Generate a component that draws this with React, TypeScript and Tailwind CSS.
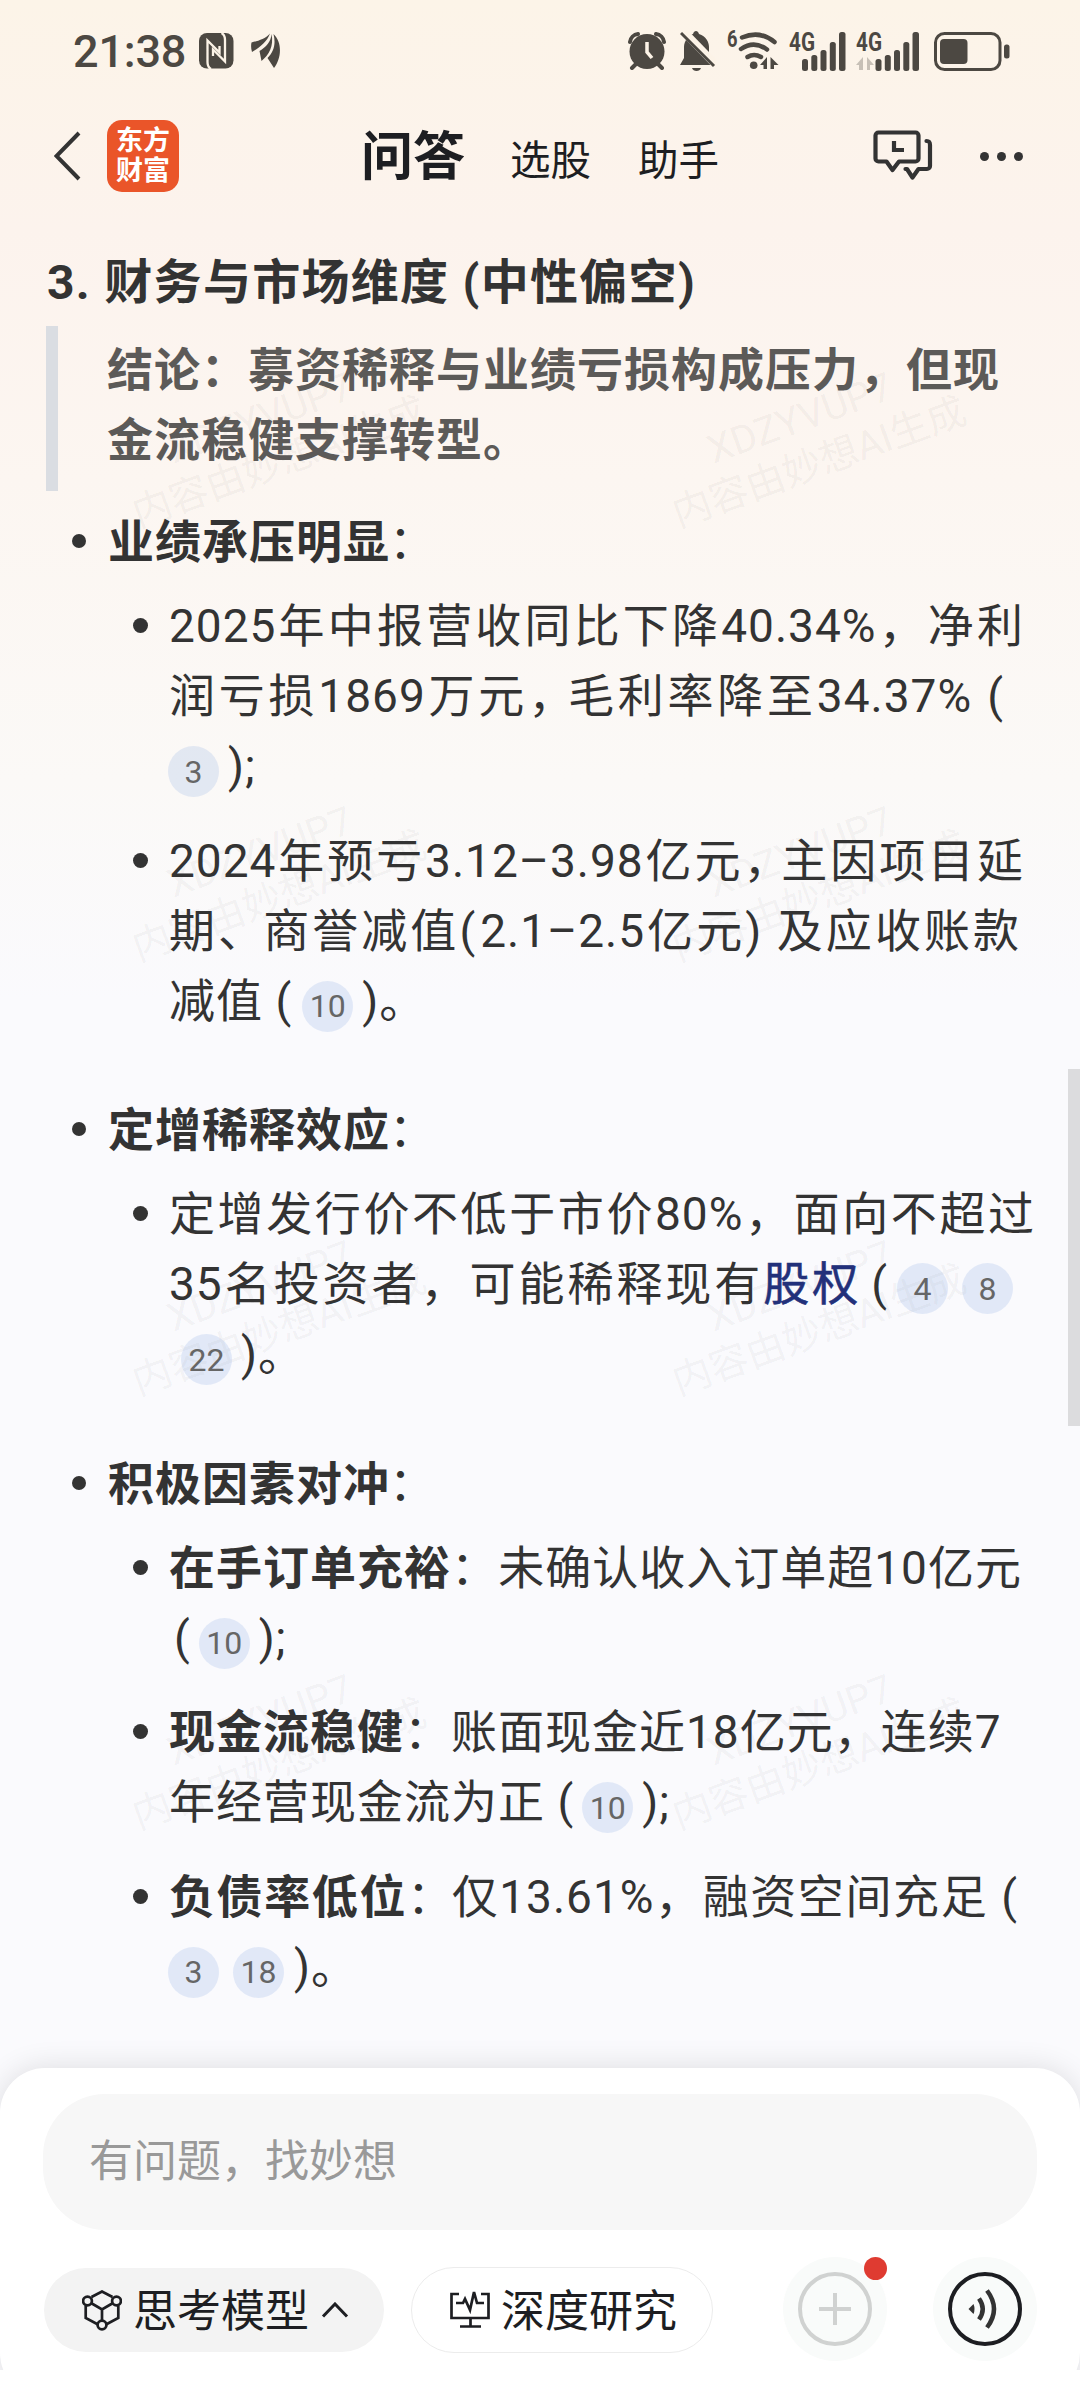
import { Fragment, type ReactNode } from "react";

const watermarkRows = [440, 874, 1308, 1742];
const watermarkCols = [271, 811];

function Cite({ n }: { n: string }) {
  return (
    <span className="relative top-[2px] -ml-px inline-flex size-[51px] shrink-0 items-center justify-center rounded-full bg-[#5a89d4]/15 align-middle text-[32px] leading-none tracking-normal text-[#666]">
      {n}
    </span>
  );
}

// One rendered row of text. `w` stretches the row to a justified width.
function Line({ children, w = "" }: { children: ReactNode; w?: string }) {
  const justify = w ? "[text-align-last:justify]" : "";
  return <div className={`h-[70px] leading-[73px] whitespace-nowrap ${justify} ${w}`}>{children}</div>;
}

function SubItem({ children }: { children: ReactNode }) {
  return (
    <li className="flex">
      <span className="mt-[28px] mr-[21px] ml-[13px] size-[15px] shrink-0 rounded-full bg-[#333]" />
      <div className="shrink-0">{children}</div>
    </li>
  );
}

function Group({ title, children }: { title: string; children: ReactNode }) {
  return (
    <section>
      <div className="flex h-[70px] items-center">
        <span className="mr-[22px] ml-[72px] size-[14px] rounded-full bg-[#333]" />
        <h3 className="pt-[3px]">
          <b>{title}</b>
          <span className="-ml-[1px]">：</span>
        </h3>
      </div>
      <ul className="mt-[14px] ml-[120px] flex flex-col gap-[24.5px]">{children}</ul>
    </section>
  );
}

function SignalBars() {
  return (
    <g>
      <rect x="13" y="27" width="6" height="12" rx="2.5" />
      <rect x="22.300" y="23" width="6" height="16" rx="2.5" />
      <rect x="31.500" y="18" width="6" height="21" rx="2.5" />
      <rect x="40.800" y="10" width="6" height="29" rx="2.5" />
      <rect x="50" y="0" width="6.500" height="39" rx="2.5" />
    </g>
  );
}

function StatusBar() {
  return (
    <div className="flex h-[104px] items-center pb-[2px] text-[#4c4842]">
      <span className="ml-[73px] w-[126px] font-[Roboto] text-[45px] leading-none font-medium tracking-[-0.2px]">21:38</span>
      <svg width="35" height="36" viewBox="0 0 35 36" fill="currentColor">
        <rect width="34.500" height="35.500" rx="8" />
        <path d="M12 36Q8.500 34 8.500 29V7.500L20.500 19.500V13" fill="none" stroke="#fcf3e7" strokeWidth="2.300" />
        <path d="M22.500 0Q26 2 26 7v21.500L14 16.500V23" fill="none" stroke="#fcf3e7" strokeWidth="2.300" />
      </svg>
      <svg className="ml-[17px]" width="30" height="36" viewBox="0 0 30 36" fill="currentColor">
        <path d="M19 0.500C14 6 7 8 0.500 9.500Q-0.500 14 1 19C8 15 16 9 19 0.500z" />
        <path d="M20.500 1C20 9 15 14 8.500 18l2 10C18 22 23 13 20.500 1z" />
        <path d="M22.500 1C25 11 23 19 16.500 25l6.500 10C30 26 32 10 22.500 1z" />
      </svg>
      <div className="ml-[347px] flex items-center">
        <svg width="38" height="38" viewBox="0 0 38 38">
          <circle cx="19" cy="19.500" r="17.500" fill="currentColor" />
          <path d="M2 10A9 9 0 0 1 10 2M28 2a9 9 0 0 1 8 8M8 32l-4 4M30 32l4 4" fill="none" stroke="currentColor" strokeWidth="4" strokeLinecap="round" />
          <path d="M19 10v10l5 6" fill="none" stroke="#fcf3e7" strokeWidth="3.500" />
        </svg>
        <svg className="ml-[14px]" width="36" height="40" viewBox="0 0 36 40">
          <path d="M0 34l4-7V16c0-6 5-12 9-13 1-4 5-4 6 0 7 2 10 8 10 13v12l4 6z" fill="currentColor" />
          <path d="M12 37h9c-1 4-8 4-9 0z" fill="currentColor" />
          <path d="M3 0l33 34" stroke="#fcf3e7" strokeWidth="8" />
          <path d="M1 2l33 33" stroke="currentColor" strokeWidth="3" />
        </svg>
        <svg className="ml-[11px] overflow-visible" width="52" height="42" viewBox="0 0 52 42" fill="currentColor">
          <text x="0" y="16.500" fontFamily="Roboto" fontWeight="700" fontSize="23" textLength="10.500" lengthAdjust="spacingAndGlyphs">6</text>
          <g fill="none" stroke="currentColor" strokeWidth="4.500" strokeLinecap="round">
            <path d="M15 7.500Q33 0 47.500 12" />
            <path d="M14 19Q27 10 40 19.500" />
            <path d="M20.500 27Q27 23 34 27" />
          </g>
          <circle cx="26.700" cy="35.300" r="3.800" />
          <path d="M33 35l7-8v12h-3.500v-4zM43.500 27l8 8h-4.500v4h-3.500z" />
        </svg>
        <svg className="ml-[10px] overflow-visible" width="57" height="39" viewBox="0 0 57 39" fill="currentColor">
          <text x="0" y="18.500" fontFamily="Roboto" fontWeight="700" fontSize="25" textLength="26" lengthAdjust="spacingAndGlyphs">4G</text>
          <SignalBars />
        </svg>
        <svg className="ml-[10px] overflow-visible" width="63" height="39" viewBox="0 0 63 39" fill="currentColor">
          <text x="0" y="18.500" fontFamily="Roboto" fontWeight="700" fontSize="25" textLength="26" lengthAdjust="spacingAndGlyphs">4G</text>
          <path d="M0 33l7-8v13H3v-5zM11 25l7 8h-4v5h-3z" opacity="0.300" />
          <g transform="translate(6.500 0)">
            <SignalBars />
          </g>
        </svg>
        <svg className="ml-[15px]" width="76" height="39" viewBox="0 0 76 39">
          <rect x="1.500" y="1.500" width="64.500" height="36" rx="9" fill="none" stroke="currentColor" strokeWidth="3" />
          <rect x="6" y="7" width="27.500" height="25" rx="4" fill="currentColor" />
          <rect x="70" y="12.500" width="5.500" height="14" rx="2.500" fill="currentColor" />
        </svg>
      </div>
    </div>
  );
}

function Header() {
  return (
    <div className="flex h-[104px] items-center text-[#333]">
      <svg className="ml-[54px]" width="27" height="50" viewBox="0 0 27 50" fill="none" stroke="currentColor" strokeWidth="4">
        <path d="M25 2L2.500 25 25 48" />
      </svg>
      <div className="ml-[26px] flex size-[72px] flex-col items-center justify-center rounded-[15px] bg-[#ea5529] text-[27px] leading-[30px] font-bold text-white">
        <span>东方</span>
        <span>财富</span>
      </div>
      <nav className="flex items-center whitespace-nowrap text-[#1d1e22]">
        <span className="mt-[3px] ml-[182px] w-[149px] text-[52px] leading-none font-bold">问答</span>
        <span className="mt-[11px] w-[128px] text-[40.5px] leading-none">选股</span>
        <span className="mt-[11px] w-[82px] text-[40.5px] leading-none">助手</span>
      </nav>
      <svg className="ml-[153px]" width="60" height="52" viewBox="0 0 60 52" fill="none" stroke="currentColor" strokeWidth="4.200" strokeLinejoin="round" strokeLinecap="round">
        <path d="M5.500 2.500h37a3 3 0 0 1 3 3v23a3 3 0 0 1-3 3H26l-6.500 8.500-6-8.500h-8a3 3 0 0 1-3-3v-23a3 3 0 0 1 3-3z" />
        <path d="M53.500 11c3 0 3.500 1.500 3.500 4v21a3 3 0 0 1-3 3h-8.500l-6 8.500L34 39h-1.500" />
        <path d="M21 11v9h10" strokeLinejoin="miter" strokeLinecap="butt" />
      </svg>
      <div className="ml-[47px] flex gap-[8px]">
        <i className="size-[9px] rounded-full bg-[#333]" />
        <i className="size-[9px] rounded-full bg-[#333]" />
        <i className="size-[9px] rounded-full bg-[#333]" />
      </div>
    </div>
  );
}

function Composer() {
  return (
    <footer className="absolute top-[2068px] left-0 h-[332px] w-full overflow-visible">
      <div className="h-[330px] rounded-[45px] bg-white px-[43px] pt-[26px] shadow-[0_0_30px_rgba(0,0,0,0.12)]">
        <div className="flex h-[136px] items-center rounded-[62px] bg-[#f7f7f7] pl-[46px] text-[44px] text-[#999]">有问题，找妙想</div>
        <div className="mt-[27px] flex h-[104px] items-center text-[44px] text-[#1d1e22]">
          <div className="mt-[2px] ml-px flex h-[84px] w-[340px] items-center rounded-full bg-[#f3f3f3] pl-[38px]">
            <svg width="40" height="41" viewBox="0 0 40 41" fill="none" stroke="currentColor" strokeWidth="2.700">
              <path d="M9.500 7L20 1.500 30.500 7M3.700 15.500V28L16 34.500M36.300 15.500V28L24 34.500M9 13l11 6.500L31 13M20 19.500V31" />
              <circle cx="5.500" cy="11" r="4.400" />
              <circle cx="34.500" cy="11" r="4.400" />
              <circle cx="20" cy="35" r="4.400" />
            </svg>
            <span className="mt-[4px] ml-[11px] leading-none">思考模型</span>
            <svg className="ml-[12px]" width="28" height="16" viewBox="0 0 28 16" fill="none" stroke="currentColor" strokeWidth="3">
              <path d="M2 14.500L14 2l12 12.500" />
            </svg>
          </div>
          <div className="mt-px ml-[27px] flex h-[86px] w-[302px] items-center rounded-full border border-[#ececec] pl-[38px]">
            <svg width="40" height="39" viewBox="0 0 40 39" fill="none" stroke="currentColor" strokeWidth="2.700">
              <path d="M9 4H1.500V28h37V4H31M20.500 28v8M10 36.500h21M6 13h7l2-4 5 11L24 2l3 11h7" />
            </svg>
            <span className="mt-[4px] ml-[11px] leading-none">深度研究</span>
          </div>
          <div className="relative ml-[70px] flex size-[104px] shrink-0 items-center justify-center rounded-full bg-[#f9fbfa]">
            <svg width="74" height="74" viewBox="0 0 74 74" fill="none" stroke="#d0d2d1" strokeWidth="4">
              <circle cx="37" cy="37" r="35" />
              <path d="M21 37h32M37 21v32" />
            </svg>
            <i className="absolute top-0 right-0 size-[23px] rounded-full bg-[#df3b31]" />
          </div>
          <div className="ml-[46px] flex size-[104px] shrink-0 items-center justify-center rounded-full bg-[#f9fbfa]">
            <svg width="74" height="74" viewBox="0 0 74 74" fill="none" stroke="#1d1e22" strokeWidth="4">
              <circle cx="37" cy="37" r="35" />
              <path d="M20.500 37l5-5q2 5 0 10z" fill="#333" stroke="none" />
              <path d="M31 26.500q7.500 10.500 0 21M39 18.500q14 18.500 0 37" stroke="#333" strokeWidth="4.500" />
            </svg>
          </div>
        </div>
      </div>
      <div className="absolute bottom-0 left-0 h-[30px] w-full bg-white" />
    </footer>
  );
}

export default function App() {
  return (
    <div className="relative h-[2400px] w-[1080px] overflow-hidden bg-[#fafafd] bg-[linear-gradient(180deg,#fcf4e8_0px,#fcf3ed_230px,#fcf6f1_480px,#fbf9f7_780px,#fafafd_1000px)] font-[Roboto,'Noto_Sans_CJK_SC',sans-serif] text-[#333]">
      <div className="pointer-events-none absolute inset-0">
        {watermarkRows.map((y) => (
          <Fragment key={y}>
            {watermarkCols.map((x) => (
              <div
                key={x}
                className="absolute w-[340px] -translate-x-1/2 -translate-y-1/2 -rotate-20 text-center text-[39px] leading-[48px] whitespace-nowrap text-black/5"
                style={{ left: x, top: y }}
              >
                <span className="mr-[6px]">XDZYVUP7</span>
                <br />
                内容由妙想AI生成
              </div>
            ))}
          </Fragment>
        ))}
      </div>

      <div className="relative">
        <StatusBar />
        <Header />

        <main className="pt-[38px] text-[46px] tracking-[1px]">
          <h2 className="ml-[47px] h-[70px] text-[48px] leading-[73px] font-bold tracking-[1.3px] whitespace-nowrap">3. 财务与市场维度 (中性偏空)</h2>
          <blockquote className="mt-[10px] ml-[46px] h-[165px] border-l-[12px] border-[#dadde2] pt-[8px] pl-[49px] font-bold text-[#5c5a58]">
            <Line>结论：募资稀释与业绩亏损构成压力，但现</Line>
            <Line>金流稳健支撑转型。</Line>
          </blockquote>

          <div className="mt-[15px] flex flex-col gap-[59.500px]">
            <Group title="业绩承压明显">
              <SubItem>
                <Line w="w-[855px]">2025年中报营收同比下降40.34%，净利</Line>
                <Line w="w-[835px]">
                  润亏损1869万元<span className="-mr-[10px]">，</span>毛利率降至34.37% (
                </Line>
                <Line>
                  <Cite n="3" />
                  <span className="ml-[9px]">);</span>
                </Line>
              </SubItem>
              <SubItem>
                <Line w="w-[855px]">
                  2024年预亏3.12–3.98亿元<span className="-mr-[11px]">，</span>主因项目延
                </Line>
                <Line w="w-[851px]">
                  期<span className="-mr-[4px]">、</span>商誉减值(<span className="ml-[4px]">2.1–2.5亿元</span>) 及应收账款
                </Line>
                <Line>
                  减值 (<span className="inline-block w-[11px]" />
                  <Cite n="10" />
                  <span className="ml-[9px]">)。</span>
                </Line>
              </SubItem>
            </Group>

            <Group title="定增稀释效应">
              <SubItem>
                <Line w="w-[866px]">定增发行价不低于市价80%，面向不超过</Line>
                <div className="flex h-[70px] whitespace-nowrap">
                  <Line w="w-[719px]">
                    35名投资者，可能稀释现有
                    <span className="text-[#22307a] [-webkit-text-stroke:0.6px_#22307a]">股权</span>
                    <span className="ml-[10px]">(</span>
                  </Line>
                  <span className="mt-[13px] ml-[10px] flex gap-[15px]">
                    <Cite n="4" />
                    <Cite n="8" />
                  </span>
                </div>
                <Line>
                  <span className="ml-[13px]">
                    <Cite n="22" />
                    <span className="ml-[9px]">)。</span>
                  </span>
                </Line>
              </SubItem>
            </Group>

            <Group title="积极因素对冲">
              <SubItem>
                <Line w="w-[853px]">
                  <b>在手订单充裕</b>：未确认收入订单超10亿元
                </Line>
                <Line>
                  <span className="mr-[9px] ml-[5px]">(</span>
                  <Cite n="10" />
                  <span className="ml-[9px]">);</span>
                </Line>
              </SubItem>
              <SubItem>
                <Line w="w-[831px]">
                  <b>现金流稳健</b>：账面现金近18亿元，连续7
                </Line>
                <Line>
                  年经营现金流为正 (<span className="inline-block w-[9px]" />
                  <Cite n="10" />
                  <span className="ml-[9px]">);</span>
                </Line>
              </SubItem>
              <SubItem>
                <Line w="w-[849px]">
                  <b>负债率低位</b>
                  <span className="-mr-[3px]">：</span>仅13.61%，融资空间充足 (
                </Line>
                <Line>
                  <Cite n="3" />
                  <span className="inline-block w-[15px]" />
                  <Cite n="18" />
                  <span className="ml-[10px]">)。</span>
                </Line>
              </SubItem>
            </Group>
          </div>
        </main>
      </div>

      <div className="absolute top-[1069px] right-0 h-[357px] w-[12px] bg-[#dcdcde]" />
      <Composer />
    </div>
  );
}
